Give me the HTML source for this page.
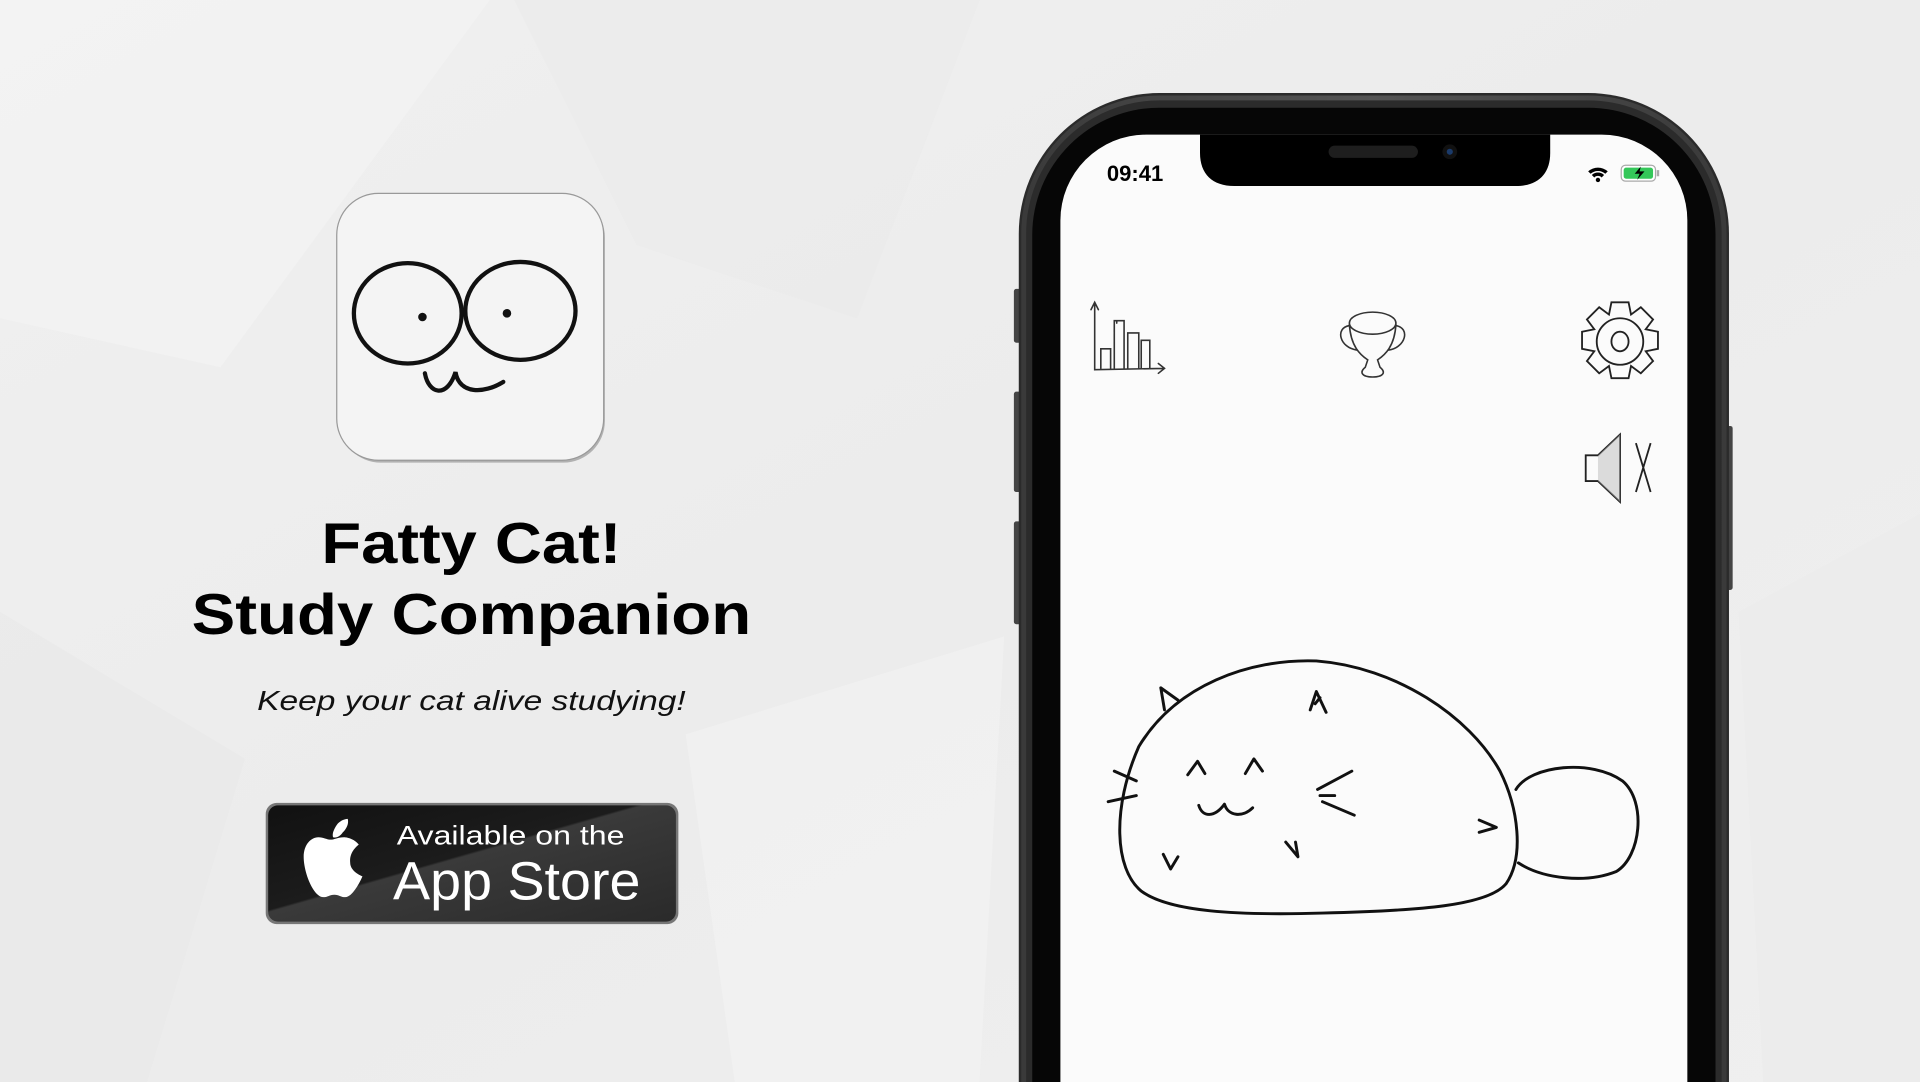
<!DOCTYPE html>
<html><head><meta charset="utf-8"><style>
html,body{margin:0;padding:0;width:1920px;height:1082px;overflow:hidden;background:#eee}
svg{display:block}
</style></head><body>
<svg width="1920" height="1082" viewBox="0 0 1568 884" preserveAspectRatio="none" xmlns="http://www.w3.org/2000/svg">
<defs>
<linearGradient id="bg" x1="0" y1="0" x2="1" y2="1">
<stop offset="0" stop-color="#f0f0f0"/><stop offset=".5" stop-color="#ececec"/><stop offset="1" stop-color="#efefef"/></linearGradient>
<linearGradient id="badge" x1="0" y1="0" x2="1" y2="1">
<stop offset="0" stop-color="#111"/><stop offset=".45" stop-color="#1c1c1c"/><stop offset=".46" stop-color="#3a3a3a"/><stop offset="1" stop-color="#2a2a2a"/></linearGradient>
<linearGradient id="frame" x1="0" y1="0" x2="1" y2="0">
<stop offset="0" stop-color="#3a3a3a"/><stop offset=".5" stop-color="#555"/><stop offset="1" stop-color="#3a3a3a"/></linearGradient>
</defs>
<rect width="1568" height="884" fill="url(#bg)"/>
<polygon points="0,0 400,0 180,300 0,260" fill="#f3f3f3" opacity=".7"/>
<polygon points="420,0 800,0 700,260 520,200" fill="#e9e9e9" opacity=".5"/>
<polygon points="0,500 200,620 120,884 0,884" fill="#e8e8e8" opacity=".5"/>
<polygon points="560,600 820,520 800,884 600,884" fill="#f2f2f2" opacity=".7"/>
<polygon points="1420,500 1568,420 1568,884 1440,884" fill="#ebebeb" opacity=".7"/>

<!-- app icon -->
<rect x="277" y="160" width="217" height="218" rx="34" fill="#000" opacity=".25"/>
<rect x="275" y="158" width="218" height="218" rx="34" fill="#f4f4f4" stroke="#999" stroke-width="1"/>
<g fill="none" stroke="#111" stroke-width="3.5" stroke-linecap="round">
<ellipse cx="333" cy="256" rx="44" ry="41"/>
<ellipse cx="425" cy="254" rx="45" ry="40"/>
<path d="M347,305 C350,322 365,326 372,304 C375,322 395,322 411,312"/>
</g>
<circle cx="345" cy="259" r="3.5" fill="#111"/><circle cx="414" cy="256" r="3.5" fill="#111"/>

<!-- title -->
<g font-family="'Liberation Sans',sans-serif" font-weight="bold" fill="#000" text-anchor="middle">
<text x="385" y="460" font-size="47" textLength="245" lengthAdjust="spacingAndGlyphs">Fatty Cat!</text>
<text x="385" y="518" font-size="47" textLength="457" lengthAdjust="spacingAndGlyphs">Study Companion</text>
</g>
<text x="385" y="580" text-anchor="middle" font-family="'Liberation Sans',sans-serif" font-style="italic" font-size="23" fill="#111" textLength="350" lengthAdjust="spacingAndGlyphs">Keep your cat alive studying!</text>

<!-- badge -->
<rect x="217" y="656" width="337" height="99" rx="9" fill="#777"/>
<rect x="219" y="658" width="333" height="95" rx="8" fill="url(#badge)"/>
<path d="M286,705 C285,696 292,691 293,690 C289,685 283,684 281,684 C276,684 273,686 270,686 C267,686 264,684 260,684 C254,684 248,690 248,700 C248,713 256,733 264,733 C268,733 269,731 273,731 C277,731 278,733 282,733 C287,733 293,723 296,716 C291,714 286,710 286,705 Z M280,680 C283,677 285,673 284,669 C281,669 277,671 275,674 C273,677 271,681 272,684 C275,685 278,683 280,680 Z" fill="#fff"/>
<text x="324" y="690" font-family="'Liberation Sans',sans-serif" font-size="22" fill="#fff" textLength="186" lengthAdjust="spacingAndGlyphs">Available on the</text>
<text x="321" y="735" font-family="'Liberation Sans',sans-serif" font-size="44" fill="#fff" textLength="202" lengthAdjust="spacingAndGlyphs">App Store</text>

<!-- phone -->
<rect x="828" y="236" width="7" height="44" rx="2" fill="#444"/>
<rect x="828" y="320" width="7" height="82" rx="2" fill="#444"/>
<rect x="828" y="426" width="7" height="84" rx="2" fill="#444"/>
<rect x="1408" y="348" width="7" height="134" rx="2" fill="#444"/>
<path d="M832,884 V191 A115,115 0 0 1 947,76 H1297 A115,115 0 0 1 1412,191 V884 Z" fill="#2b2b2b"/>
<path d="M836,884 V191 A111,111 0 0 1 947,80 H1297 A111,111 0 0 1 1408,191 V884" fill="none" stroke="url(#frame)" stroke-width="4"/>
<path d="M843,884 V192 A104,104 0 0 1 947,88 H1297 A104,104 0 0 1 1401,192 V884 Z" fill="#060606"/>
<path d="M866,884 V180 A70,70 0 0 1 936,110 H1308 A70,70 0 0 1 1378,180 V884 Z" fill="#fbfbfb"/>
<path d="M980,110 L980,125 C980,142 990,152 1008,152 L1238,152 C1256,152 1266,142 1266,125 L1266,110 Z" fill="#000"/>
<rect x="1085" y="119" width="73" height="10" rx="5" fill="#1e1e1e"/>
<circle cx="1184" cy="124" r="6" fill="#111"/><circle cx="1184" cy="124" r="2.5" fill="#1a3a6a"/>
<text x="904" y="148" font-family="'Liberation Sans',sans-serif" font-weight="bold" font-size="18" fill="#000">09:41</text>
<g fill="#000"><path d="M1297,140 a12,12 0 0 1 16,0 l-2,2 a9,9 0 0 0 -12,0 z"/><path d="M1300,143 a7,7 0 0 1 10,0 l-2,2 a4,4 0 0 0 -6,0 z"/><circle cx="1305" cy="147" r="1.8"/></g>
<rect x="1324" y="135" width="28" height="13" rx="3.5" fill="#fff" stroke="#aaa" stroke-width="1"/>
<rect x="1326" y="137" width="24" height="9" rx="2" fill="#34c759"/>
<rect x="1353" y="139" width="2" height="5" fill="#aaa"/>
<path d="M1340,136 l-5,6 h4 l-2,5 l6,-7 h-4 z" fill="#000"/>

<!-- screen icons -->
<g fill="none" stroke="#333" stroke-width="1.3" stroke-linecap="round">
<path d="M894,248 L894,302 L950,301 M946,297 L951,301 L946,305 M891,253 L894,247 L897,253"/>
<path d="M899,301 V285 H907 V301 M910,301 V262 H918 V301 M912,262 V264 M921,301 V272 H930 V301 M932,301 V278 H939 V301"/>
<ellipse cx="1121" cy="264" rx="19" ry="9"/>
<path d="M1102,265 C1103,283 1111,290 1117,294 L1115,300 C1110,304 1112,308 1121,308 C1130,308 1132,304 1127,300 L1125,294 C1131,290 1139,283 1140,265 M1102,266 C1090,268 1094,284 1108,286 M1140,266 C1152,268 1148,284 1134,286"/>
</g>
<g fill="none" stroke="#222" stroke-width="1.5">
<path d="M1316,247 h14 l2,10 l8,-6 l10,10 l-6,8 l10,2 v14 l-10,2 l6,8 l-10,10 l-8,-6 l-2,10 h-14 l-2,-10 l-8,6 l-10,-10 l6,-8 l-10,-2 v-14 l10,-2 l-6,-8 l10,-10 l8,6 z"/>
<circle cx="1323" cy="279" r="19"/><ellipse cx="1323" cy="279" rx="7" ry="8"/>
<path d="M1295,372 h10 l18,-17 v55 l-18,-17 h-10 z"/>
<path d="M1336,362 l12,40 M1348,362 l-12,40"/>
</g>
<path d="M1305,372 l18,-17 v55 l-18,-17 z" fill="#bbb" opacity=".5"/>

<!-- cat -->
<g fill="none" stroke="#111" stroke-width="2.4" stroke-linecap="round" stroke-linejoin="round">
<path d="M930,610 C960,560 1020,538 1075,540 C1140,545 1200,585 1225,630 C1240,660 1245,700 1230,722 C1215,740 1160,744 1080,746 C1010,748 955,745 932,728 C910,710 908,660 930,610 Z"/>
<path d="M1238,645 C1250,625 1300,620 1325,638 C1345,655 1340,700 1320,712 C1295,722 1260,718 1240,705"/>
<path d="M948,562 L951,580 M948,562 L962,572"/>
<path d="M1070,580 L1075,565 L1083,582 M1074,575 L1078,570"/>
<path d="M970,633 L978,622 L984,632 M1017,632 L1024,620 L1031,630"/>
<path d="M979,658 C982,668 992,668 1000,657 C1003,667 1015,668 1023,660"/>
<path d="M1076,645 L1104,630 M1080,655 L1106,666 M1078,650 L1090,650"/>
<path d="M910,630 L928,638 M905,655 L928,650"/>
<path d="M1050,688 L1060,700 L1058,688 M950,698 L956,710 L962,700 M1208,670 L1222,676 L1208,680"/>
</g>
</svg>
</body></html>
